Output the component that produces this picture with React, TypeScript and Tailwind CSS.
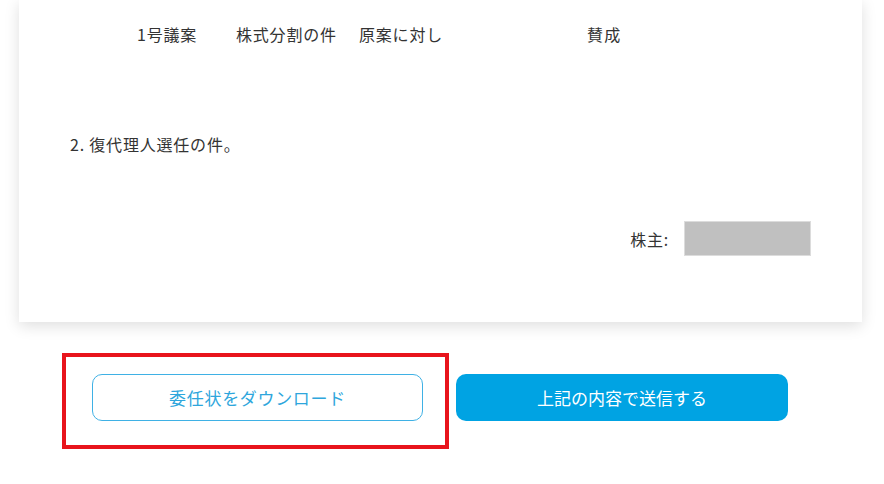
import React from 'react'

const font = { fontFamily: '"Noto Sans CJK JP", "Noto Sans", sans-serif' }

const App: React.FC = () => {
  return (
    <div className="min-h-[484px] w-[884px] bg-white text-[#333] text-[16px] tracking-[0.05em]" style={font}>
      {/* Proxy form card */}
      <div className="ml-[19px] w-[843px] bg-white pt-[22px] pb-[66px] shadow-[0_4px_14px_rgba(0,0,0,0.13)]">
        <div className="flex leading-[24px]">
          <span className="ml-[118px] w-[99px]">1号議案</span>
          <span className="w-[123px]">株式分割の件</span>
          <span className="w-[228px]">原案に対し</span>
          <span className="tracking-[0.08em]">賛成</span>
        </div>

        <div className="mt-[86px] ml-[51px] leading-[24px]">2. 復代理人選任の件。</div>

        <div className="mt-[65px] mr-[51px] flex items-center justify-end gap-[15px]">
          <span className="leading-[24px]">株主:</span>
          <div className="h-[35px] w-[127px] border border-[#dcdcdc] bg-[#c0c0c0]" />
        </div>
      </div>

      {/* Actions */}
      <div className="mt-[52px] ml-[92px] flex gap-[33px]">
        <div className="relative">
          <button className="h-[47px] w-[331px] rounded-[10px] border border-[#3fb1e5] bg-white text-[17px] text-[#2ea6dc] tracking-[0.04em]">
            委任状をダウンロード
          </button>
          <div className="pointer-events-none absolute -left-[30px] -top-[21px] -right-[26px] -bottom-[28px] border-4 border-[#e8141c]" />
        </div>
        <button className="h-[47px] w-[332px] rounded-[10px] bg-[#00a3e3] text-[17px] text-white tracking-[0.0em]">
          上記の内容で送信する
        </button>
      </div>
    </div>
  )
}

export default App
